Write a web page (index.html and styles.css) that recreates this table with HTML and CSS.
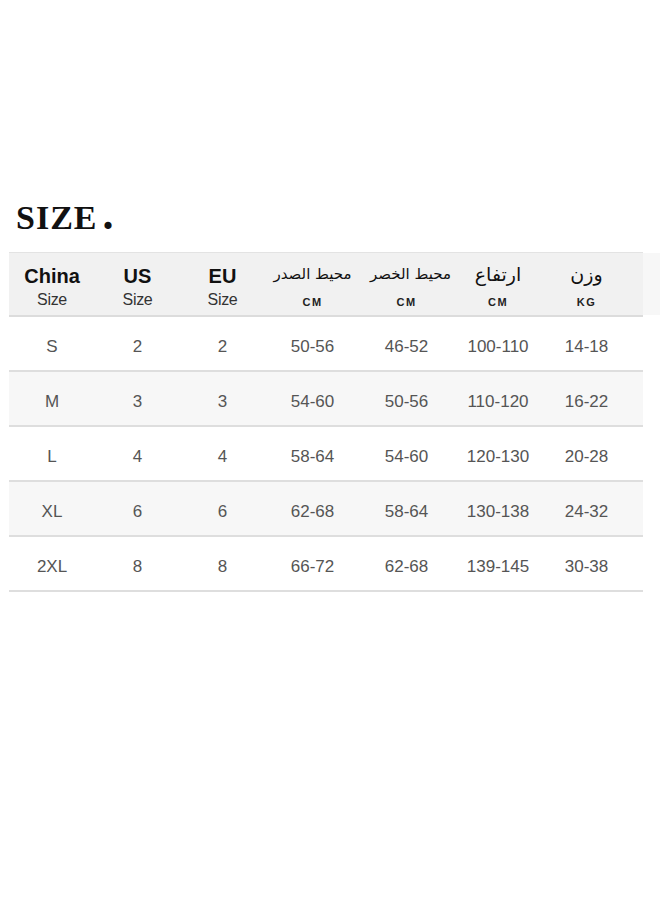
FILE: index.html
```html
<!DOCTYPE html>
<html>
<head>
<meta charset="utf-8">
<link rel="stylesheet" href="styles.css">
</head>
<body>
<div class="page">
  <div class="title">SIZE<span class="dot">.</span></div>
  <div class="table">
    <div class="head-wrap">
      <div class="row head">
        <div class="cell hcell"><span class="en">China</span><span class="sub">Size</span></div>
        <div class="cell hcell"><span class="en">US</span><span class="sub">Size</span></div>
        <div class="cell hcell"><span class="en">EU</span><span class="sub">Size</span></div>
        <div class="cell hcell"><span class="ar">محيط الصدر</span><span class="unit">CM</span></div>
        <div class="cell hcell shift"><span class="ar">محيط الخصر</span><span class="unit">CM</span></div>
        <div class="cell hcell"><span class="ar big">ارتفاع</span><span class="unit">CM</span></div>
        <div class="cell hcell"><span class="ar big">وزن</span><span class="unit">KG</span></div>
        <div class="cell"></div>
      </div>
      <div class="filler"></div>
    </div>
    <div class="row data">
      <div class="cell">S</div><div class="cell">2</div><div class="cell">2</div><div class="cell">50-56</div><div class="cell">46-52</div><div class="cell">100-110</div><div class="cell">14-18</div><div class="cell"></div>
    </div>
    <div class="row data alt">
      <div class="cell">M</div><div class="cell">3</div><div class="cell">3</div><div class="cell">54-60</div><div class="cell">50-56</div><div class="cell">110-120</div><div class="cell">16-22</div><div class="cell"></div>
    </div>
    <div class="row data">
      <div class="cell">L</div><div class="cell">4</div><div class="cell">4</div><div class="cell">58-64</div><div class="cell">54-60</div><div class="cell">120-130</div><div class="cell">20-28</div><div class="cell"></div>
    </div>
    <div class="row data alt">
      <div class="cell">XL</div><div class="cell">6</div><div class="cell">6</div><div class="cell">62-68</div><div class="cell">58-64</div><div class="cell">130-138</div><div class="cell">24-32</div><div class="cell"></div>
    </div>
    <div class="row data">
      <div class="cell">2XL</div><div class="cell">8</div><div class="cell">8</div><div class="cell">66-72</div><div class="cell">62-68</div><div class="cell">139-145</div><div class="cell">30-38</div><div class="cell"></div>
    </div>
  </div>
</div>
</body>
</html>
```

FILE: styles.css
```css
html, body {
  margin: 0;
  padding: 0;
  background: #ffffff;
}

.page {
  width: 660px;
  height: 904px;
  overflow: hidden;
}

.title {
  padding: 201px 0 0 16px;
  height: 33px;
  font-family: "Liberation Serif", "Times New Roman", serif;
  font-weight: bold;
  font-size: 34px;
  line-height: 33px;
  letter-spacing: 1px;
  color: #111;
  white-space: nowrap;
}

.dot {
  display: inline-block;
  font-size: 44px;
  line-height: 0;
  margin-left: 5px;
}

.table {
  margin: 18px 0 0 9px;
  font-family: "Liberation Sans", Arial, sans-serif;
}

.head-wrap {
  display: flex;
}

.row {
  display: grid;
  grid-template-columns: 86px 85px 85px 95px 93px 90px 87px 13px;
  width: 634px;
}

.cell {
  display: flex;
  align-items: center;
  justify-content: center;
  text-align: center;
}

.head {
  height: 62px;
  background: #f1f1f1;
  border-top: 1px solid #e3e3e3;
  border-bottom: 2px solid #dcdcdc;
}

.filler {
  width: 17px;
  height: 62px;
  margin-top: 1px;
  background: #f7f7f7;
}

.hcell {
  flex-direction: column;
  justify-content: flex-start;
}

.shift .ar {
  margin-left: 8px;
}

.en {
  margin-top: 11px;
  font-size: 20px;
  line-height: 24px;
  font-weight: bold;
  color: #111;
}

.sub {
  font-size: 16px;
  line-height: 24px;
  color: #333;
  letter-spacing: -0.3px;
}

.ar {
  margin-top: 8px;
  height: 26px;
  font-family: "DejaVu Sans", "Noto Sans", sans-serif;
  font-size: 15px;
  line-height: 26px;
  color: #111;
  white-space: nowrap;
}

.ar.big {
  font-size: 19px;
}

.unit {
  margin-top: 2px;
  font-size: 11px;
  line-height: 26px;
  font-weight: bold;
  letter-spacing: 1.5px;
  color: #222;
}

.data {
  height: 46px;
  padding-top: 7px;
  border-bottom: 2px solid #dedede;
  font-size: 17px;
  color: #555;
}

.alt {
  background: #f7f7f7;
}
```
